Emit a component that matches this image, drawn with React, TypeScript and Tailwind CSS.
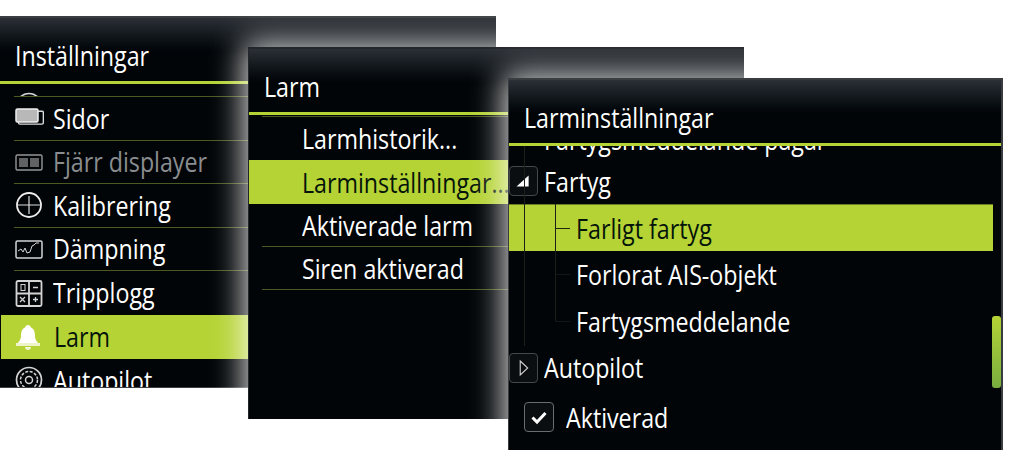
import React from 'react';

const GREEN = 'bg-[#b5d334]';

// text in the device font is narrower than anything installed, so squeeze it
const Label: React.FC<{ children: React.ReactNode; className?: string }> = ({ children, className = '' }) => (
  <span className={`inline-block origin-left scale-x-[0.86] whitespace-nowrap text-[27px] leading-none font-['Open_Sans',sans-serif] ${className}`}>
    {children}
  </span>
);

const IconBox: React.FC<{ children: React.ReactNode; dim?: boolean }> = ({ children, dim }) => (
  <svg viewBox="0 0 30 30" className={`h-[30px] w-[30px] shrink-0 ${dim ? 'opacity-70' : ''}`} fill="none" stroke="#d4d4d4" strokeWidth="1.5">
    {children}
  </svg>
);

const SidorIcon = () => (
  <IconBox>
    <rect x="6" y="10" width="27" height="14" rx="1.5" transform="translate(-1 -1) scale(0.92)" stroke="#ddd" />
    <rect x="2" y="6" width="22" height="13" rx="1.5" fill="#b8b8b8" stroke="#eee" />
  </IconBox>
);

const FjarrIcon = () => (
  <IconBox dim>
    <rect x="2" y="8" width="26" height="15" rx="1.5" strokeWidth="1.4" />
    <rect x="5" y="11" width="9" height="9" fill="#8a8a8a" stroke="none" />
    <rect x="16" y="11" width="9" height="9" fill="#8a8a8a" stroke="none" />
  </IconBox>
);

const KalibreringIcon = () => (
  <IconBox>
    <circle cx="15" cy="15" r="12" strokeWidth="1.8" stroke="#eee" />
    <path d="M3 15h24M15 6v18" strokeWidth="1.2" stroke="#ddd" />
  </IconBox>
);

const DampningIcon = () => (
  <IconBox>
    <rect x="2" y="7" width="26" height="17" rx="1.5" />
    <path d="M4 17l3-2 2 3 2-4 2 5 3-1 2-6 2-1 2-2h3" strokeWidth="1" />
  </IconBox>
);

const TripIcon = () => (
  <IconBox>
    <rect x="2.5" y="3" width="25" height="25" rx="1.5" strokeWidth="1.8" />
    <path d="M15 3v25M2.500 15.500h25" strokeWidth="1.8" />
    <path d="M19 9.500h5M19 21.500h5M21.500 19v5M6 19l5 5M11 19l-5 5" strokeWidth="1.3" />
    <rect x="7" y="6.500" width="4" height="6" strokeWidth="1" />
  </IconBox>
);

const BellIcon = () => (
  <svg viewBox="0 0 30 30" className="h-[30px] w-[30px] shrink-0">
    <path d="M15 3c-1.500 0-2.500 1-3 2.500C8.500 7 8 11 8 14c0 4-2.500 6-4 8v2h22v-2c-1.500-2-4-4-4-8 0-3-.5-7-4-8.500C17.500 4 16.500 3 15 3z" fill="#fff" />
    <rect x="3" y="21" width="24" height="3" fill="#eef4c8" />
    <path d="M12 25h6c0 2-1.500 3-3 3s-3-1-3-3z" fill="#f3f7d8" />
  </svg>
);

const AutopilotIcon = () => (
  <IconBox>
    <circle cx="15" cy="15" r="12.500" strokeWidth="1.700" />
    <circle cx="15" cy="15" r="8.500" strokeWidth="1.500" strokeDasharray="3 1.500" />
    <circle cx="15" cy="15" r="3.500" strokeWidth="1.500" />
  </IconBox>
);

const Header: React.FC<{ title: string }> = ({ title }) => (
  <>
    <div className="h-[33px] shrink-0 bg-gradient-to-b from-[#2b3036] to-[#020508]" />
    <div className="h-[30px] shrink-0 pl-[15px]">
      <Label className="text-white -translate-y-[9px]">{title}</Label>
    </div>
    <div className={`h-[3px] shrink-0 ${GREEN}`} />
  </>
);

const Rule = 'border-b border-[#4a5a20]';

const settings = [
  { label: 'Sidor', icon: <SidorIcon /> },
  { label: 'Fjärr displayer', icon: <FjarrIcon />, dim: true },
  { label: 'Kalibrering', icon: <KalibreringIcon /> },
  { label: 'Dämpning', icon: <DampningIcon /> },
  { label: 'Tripplogg', icon: <TripIcon /> },
  { label: 'Larm', icon: <BellIcon />, active: true },
  { label: 'Autopilot', icon: <AutopilotIcon /> },
];

const SettingsWindow = () => (
  <div className="absolute left-0 top-[16px] flex h-[372px] w-[496px] flex-col overflow-hidden border-t-2 border-b border-[#3c3f42] bg-[#020508]">
    <Header title="Inställningar" />
    <div className="flex-1 overflow-hidden">
      <div className={`ml-[14px] flex h-[13px] items-end overflow-hidden ${Rule}`}>
        <div className="-mb-[25px] flex items-center gap-[11px]">
          <AutopilotIcon />
          <Label className="text-white">Kursskrivar</Label>
        </div>
      </div>
      {settings.map((s) =>
        s.active ? (
          <div key={s.label} className={`ml-[1px] flex h-[44px] items-center gap-[11px] pl-[12px] ${GREEN}`}>
            {s.icon}
            <Label className="text-[#04140a]">{s.label}</Label>
          </div>
        ) : (
          <div key={s.label} className={`ml-[14px] flex h-[43.500px] items-center gap-[9px] ${s.label === 'Autopilot' || s.label === 'Tripplogg' ? '' : Rule}`}>
            {s.icon}
            <Label className={s.dim ? 'text-[#8a8d90]' : 'text-white'}>{s.label}</Label>
          </div>
        ),
      )}
    </div>
  </div>
);

const larm = [
  { label: 'Larmhistorik...' },
  { label: 'Larminställningar...', active: true },
  { label: 'Aktiverade larm' },
  { label: 'Siren aktiverad' },
];

const LarmWindow = () => (
  <div className="absolute left-[248px] top-[47px] flex h-[372px] w-[496px] flex-col overflow-hidden border-t-2 border-l border-[#23272b] bg-[#020508] shadow-[0_0_30px_4px_rgba(255,255,255,0.85)]">
    <Header title="Larm" />
    <div className={`ml-[13px] h-[2px] ${Rule}`} />
    {larm.map((r) =>
      r.active ? (
        <div key={r.label} className={`flex h-[44px] items-center pl-[53px] ${GREEN}`}>
          <Label className="text-[#04140a]">{r.label}</Label>
        </div>
      ) : (
        <div key={r.label} className={`ml-[13px] flex h-[43px] items-center pl-[40px] ${r.label === 'Larmhistorik...' ? '' : Rule}`}>
          <Label className="text-white">{r.label}</Label>
        </div>
      ),
    )}
  </div>
);

const Expander: React.FC<{ open?: boolean }> = ({ open }) => (
  <div className="flex h-[30px] w-[29px] shrink-0 items-center justify-center rounded-[4px] border border-[#45484b] bg-[#0b0e11]">
    <svg viewBox="0 0 29 30" className="h-[28px] w-[27px]">
      {open ? (
        <path d="M7 21L20 9v12z" fill="#fff" />
      ) : (
        <path d="M11 7.500l8 7.500-8 7.500z" fill="none" stroke="#cfcfcf" strokeWidth="1.200" />
      )}
    </svg>
  </div>
);

const AlarmSettingsWindow = () => (
  <div className="absolute left-[508px] top-[78px] flex h-[372px] w-[495px] flex-col overflow-hidden border-t-2 border-l border-r-2 border-[#3a3d40] border-b-0 bg-[#020508] shadow-[0_0_30px_4px_rgba(255,255,255,0.85)]">
    <Header title="Larminställningar" />
    <div className="relative flex-1 overflow-hidden">
      <div className="h-[12px] overflow-hidden pl-[35px]">
        <div className="-mt-[20px]">
          <Label className="text-white">Fartygsmeddelande pågår</Label>
        </div>
      </div>
      <div className="flex h-[46px] items-center gap-[6px]">
        <Expander open />
        <Label className="text-white">Fartyg</Label>
      </div>
      <div className={`flex h-[47px] w-[484px] items-center border-t border-[#6d7f26] pl-[46px] ${GREEN}`}>
        <div className="mr-[6px] h-px w-[15px] bg-[#20260c]" />
        <Label className="text-[#04140a]">Farligt fartyg</Label>
      </div>
      <div className="flex h-[47px] items-center pl-[46px]">
        <div className="mr-[6px] h-px w-[15px] bg-[#14171a]" />
        <Label className="text-white">Forlorat AIS-objekt</Label>
      </div>
      <div className="flex h-[46px] items-center pl-[46px]">
        <div className="mr-[6px] h-px w-[15px] bg-[#14171a]" />
        <Label className="text-white">Fartygsmeddelande</Label>
      </div>
      <div className="flex h-[47px] items-center gap-[6px]">
        <Expander />
        <Label className="text-white">Autopilot</Label>
      </div>
      <div className="flex h-[52px] items-center gap-[12px] pl-[15px]">
        <div className="flex h-[30px] w-[30px] items-center justify-center rounded-[4px] border border-[#6a6d70] bg-[#0b0e11]">
          <svg viewBox="0 0 20 20" className="h-[20px] w-[20px]">
            <path d="M3.500 10.500l4.500 4.500 8.500-9" fill="none" stroke="#fff" strokeWidth="3" />
          </svg>
        </div>
        <Label className="text-white">Aktiverad</Label>
      </div>
      <div className="absolute left-[15px] top-0 h-[200px] w-px bg-[#1b1f1a]" />
      <div className="absolute left-[46px] top-[58px] h-[117px] w-px bg-[#1b1f1a]" />
      <div className="absolute right-0 top-[170px] h-[72px] w-[9px] rounded-[3px] bg-gradient-to-b from-[#b5d334] to-[#78ad3e]" />
    </div>
  </div>
);

export default function App() {
  return (
    <div className="relative h-[474px] w-[1028px] overflow-hidden bg-white">
      <SettingsWindow />
      <LarmWindow />
      <AlarmSettingsWindow />
    </div>
  );
}
